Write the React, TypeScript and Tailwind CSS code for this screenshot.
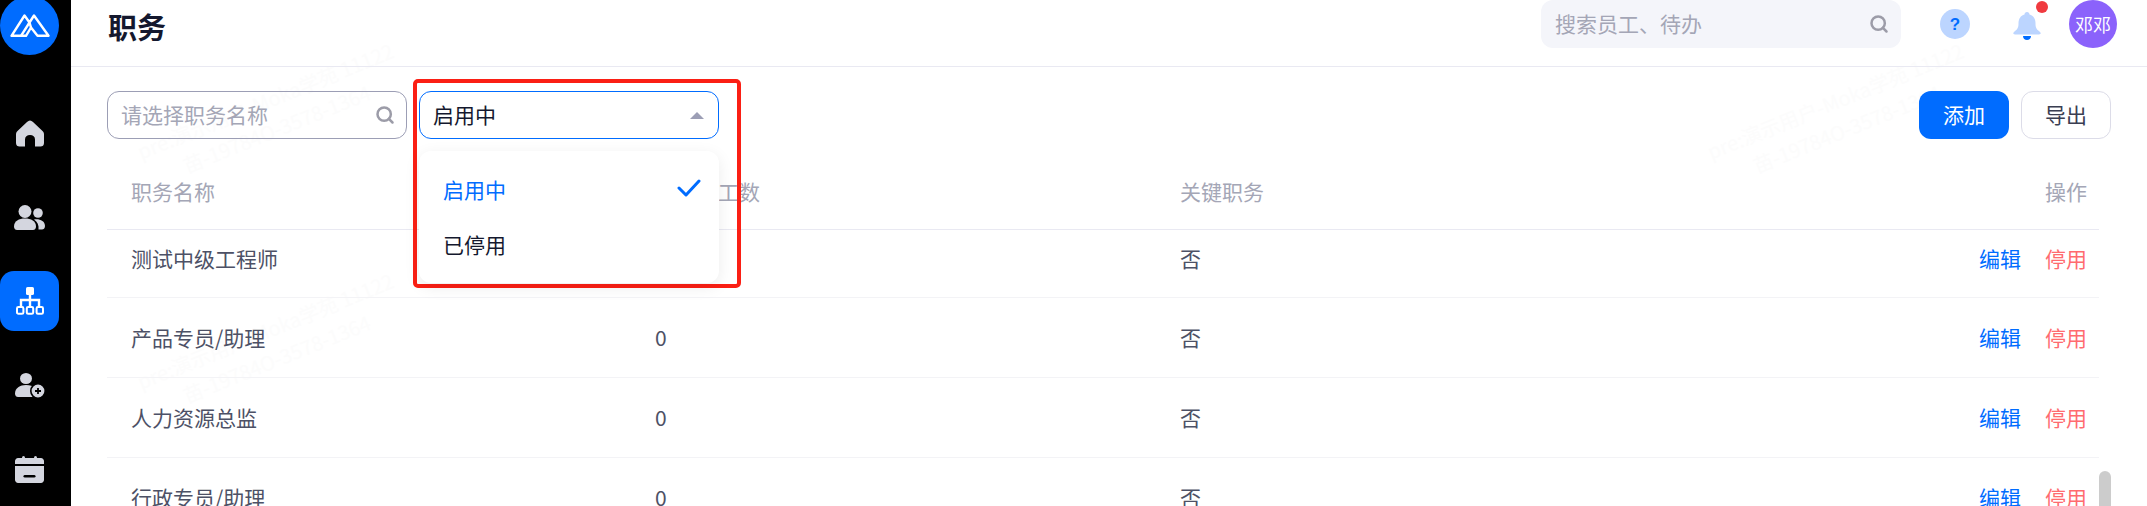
import { Search } from 'lucide-react';

const font = { fontFamily: '"Noto Sans CJK SC", "Liberation Sans", sans-serif' };

const rows = [
  { name: '测试中级工程师', count: '0', key: '否' },
  { name: '产品专员/助理', count: '0', key: '否' },
  { name: '人力资源总监', count: '0', key: '否' },
  { name: '行政专员/助理', count: '0', key: '否' },
];

function Logo() {
  return (
    <svg viewBox="0 0 40 23" className="w-10 h-[23px]" fill="none" stroke="white" strokeWidth="2.4" strokeLinejoin="round">
      <path d="M1.5 21.8 L14.5 1.5 L19.5 8.5 L24 1.5 L38.5 21.8 L27.5 21.8 L21 13.5 L16 21.8 Z" />
      <path d="M19.5 8.5 L11 21.8 M19.5 8.5 L21 13.5" />
    </svg>
  );
}

function NavIcon({ children, active }: { children: React.ReactNode; active?: boolean }) {
  return (
    <div className={`w-[59px] h-[60px] flex items-center justify-center rounded-[14px] ${active ? 'bg-[#006cff]' : ''}`}>
      {children}
    </div>
  );
}

function Sidebar() {
  return (
    <aside className="w-[71px] h-full bg-black shrink-0 overflow-hidden flex flex-col">
      <div className="w-[59px] h-[59px] shrink-0 -mt-[4px] rounded-full bg-[#006cff] flex items-center justify-center">
        <Logo />
      </div>
      <div className="mt-[48px] flex flex-col gap-[24px] shrink-0">
        <NavIcon>
          <svg viewBox="0 0 28 27" className="w-7 h-[27px]" fill="#d4d6df">
            <path d="M14 0.5 C15 0.5 16 1 17 2 L26.5 11 C27.5 12 28 13 28 14.5 L28 23 C28 25.5 26.5 26.5 24.5 26.5 L19 26.5 L19 19.5 C19 16.5 17 15 14 15 C11 15 9 16.5 9 19.5 L9 26.5 L3.5 26.5 C1.5 26.5 0 25.5 0 23 L0 14.5 C0 13 0.5 12 1.5 11 L11 2 C12 1 13 0.5 14 0.5 Z" />
          </svg>
        </NavIcon>
        <NavIcon>
          <svg viewBox="0 0 31 25" className="w-[31px] h-[25px]" fill="#d4d6df">
            <circle cx="11" cy="6.5" r="6.5" />
            <path d="M0 21.5 C0 16 5 13.5 11 13.5 C17 13.5 22 16 22 21.5 C22 24 20.5 25 19 25 L3 25 C1.5 25 0 24 0 21.5 Z" />
            <circle cx="24" cy="8" r="4.8" />
            <path d="M20 14.5 C25 13.5 31 15.5 31 21 C31 23.5 29.5 24.5 28 24.5 L24.5 24.5 C25 20.5 23.5 16.8 20 14.5 Z" />
          </svg>
        </NavIcon>
        <NavIcon active>
          <svg viewBox="0 0 28 28" className="w-7 h-7" fill="none" stroke="white" strokeWidth="2">
            <rect x="10" y="0" width="8" height="8" rx="1.6" fill="white" stroke="none" />
            <path d="M14 8 V20 M5 20 V13 H23 V20" strokeWidth="2.4" />
            <rect x="1" y="20" width="6.4" height="6.8" rx="1.4" />
            <rect x="10.8" y="20" width="6.4" height="6.8" rx="1.4" />
            <rect x="20.6" y="20" width="6.4" height="6.8" rx="1.4" />
          </svg>
        </NavIcon>
        <NavIcon>
          <svg viewBox="0 0 30 25" className="w-[30px] h-[25px]">
            <ellipse cx="11" cy="5.5" rx="6" ry="5.5" fill="#d4d6df" />
            <path d="M0 20.5 C0 15 5 12 11 12 C15 12 18 13 20 15 L20 24 L3 24 C1.5 24 0 23 0 20.5 Z" fill="#d4d6df" />
            <circle cx="23" cy="18" r="7.2" fill="#d4d6df" stroke="black" strokeWidth="1.6" />
            <path d="M23 15 V21 M20 18 H26" stroke="black" strokeWidth="1.8" />
          </svg>
        </NavIcon>
        <NavIcon>
          <svg viewBox="0 0 29 27" className="w-[29px] h-[27px]" fill="#d4d6df">
            <rect x="7" y="0" width="3" height="4" rx="1.5" />
            <rect x="19" y="0" width="3" height="4" rx="1.5" />
            <path d="M3 2 H26 C27.5 2 29 3.5 29 5 V8 H0 V5 C0 3.5 1.5 2 3 2 Z" />
            <path d="M0 10 H29 V24 C29 25.5 27.5 27 26 27 H3 C1.5 27 0 25.5 0 24 Z" />
            <rect x="8.5" y="19" width="12" height="2.6" rx="1.3" fill="black" />
          </svg>
        </NavIcon>
      </div>
    </aside>
  );
}

function Header() {
  return (
    <header className="h-[67px] shrink-0 border-b border-[#e9e9f2] flex items-start pl-[37px] pr-[30px]">
      <h1 className="text-[29px] font-bold text-[#14182e] leading-[52px]">职务</h1>
      <div className="ml-auto w-[360px] h-[48px] bg-[#f4f5fa] rounded-[12px] flex items-center pl-[14px] pr-[12px]">
        <span className="text-[21px] text-[#a4a6b6]">搜索员工、待办</span>
        <Search className="ml-auto text-[#9c9ca8]" size={20} strokeWidth={3} />
      </div>
      <div className="ml-[39px] mt-[9px] w-[30px] h-[30px] rounded-full bg-[#bcd5ff] flex items-center justify-center">
        <span className="text-[17px] font-bold text-[#006cff] leading-none" style={{ fontFamily: '"Liberation Sans", sans-serif' }}>?</span>
      </div>
      <div className="relative ml-[43px] mt-[12px] w-[28px] h-[28px]">
        <svg viewBox="0 0 28 28" className="w-7 h-7">
          <path d="M14 0 C15.5 0 16.5 1 16.5 2.5 C20.5 3.5 22.5 7 22.5 11 C22.5 15 23 17 26.5 19.5 C28.5 21 27.8 22.5 26 22.5 H2 C0.2 22.5 -0.5 21 1.5 19.5 C5 17 5.5 15 5.5 11 C5.5 7 7.5 3.5 11.5 2.5 C11.5 1 12.5 0 14 0 Z" fill="#bcd5ff" />
          <path d="M10 24 H18 C18 26.5 16.2 28 14 28 C11.8 28 10 26.5 10 24 Z" fill="#006cff" />
        </svg>
        <span className="absolute -top-[11px] left-[23px] w-[12px] h-[12px] rounded-full bg-[#f03a3f]" />
      </div>
      <div className="ml-[28px] w-[48px] h-[48px] rounded-full bg-[#8b62fb] flex items-center justify-center text-white text-[18px] leading-none whitespace-nowrap">
        邓邓
      </div>
    </header>
  );
}

function Toolbar() {
  return (
    <div className="flex items-center h-[48px] mt-[24px] ml-[36px] mr-[36px] shrink-0">
      <div className="w-[300px] h-[48px] rounded-[12px] border border-[#9c9eb5] flex items-center pl-[13px] pr-[11px]">
        <span className="text-[21px] text-[#a4a6b6]">请选择职务名称</span>
        <Search className="ml-auto text-[#9c9ca8]" size={20} strokeWidth={3} />
      </div>
      <div className="ml-[12px] w-[300px] h-[48px] rounded-[12px] border border-[#006cff] flex items-center pl-[13px] pr-[14px] bg-white">
        <span className="text-[21px] text-[#14182e]">启用中</span>
        <span className="ml-auto w-0 h-0 border-x-[7px] border-x-transparent border-b-[7px] border-b-[#9c9eb5]" />
      </div>
      <button className="ml-auto w-[90px] h-[48px] rounded-[12px] bg-[#006cff] text-white text-[21px]">添加</button>
      <button className="ml-[12px] w-[90px] h-[48px] rounded-[12px] border border-[#dcdce8] text-[#3a3e52] text-[21px] bg-white">导出</button>
    </div>
  );
}

function Table() {
  return (
    <div className="ml-[36px] mr-[48px] text-[21px] shrink-0">
      <div className="h-[91px] pt-[16px] border-b border-[#e9e9f2] flex items-center text-[#a4a6b6] pr-[12px]">
        <span className="w-[548px] pl-[24px]">职务名称</span>
        <span className="w-[525px] whitespace-nowrap">在职员工数</span>
        <span>关键职务</span>
        <span className="ml-auto">操作</span>
      </div>
      {rows.map((r, i) => (
        <div key={r.name} className={`flex items-center border-b border-[#f3f3f6] text-[#4d5166] pr-[12px] ${i === 0 ? 'h-[68px] pb-[9px]' : 'h-[80px]'}`}>
          <span className="w-[548px] pl-[24px]">{r.name}</span>
          <span className="w-[525px]">{r.count}</span>
          <span>{r.key}</span>
          <span className="ml-auto text-[#006cff]">编辑</span>
          <span className="ml-[24px] text-[#ff6b6f]">停用</span>
        </div>
      ))}
    </div>
  );
}

function Dropdown() {
  return (
    <div className="absolute left-[342px] top-[79px] w-[328px] h-[209px] border-[4px] border-[#fb1f14] rounded-[5px]">
      <div className="ml-[2px] mt-[68px] w-[300px] h-[132px] bg-white rounded-[12px] shadow-[0_4px_16px_rgba(0,0,0,0.08)] flex flex-col justify-center text-[21px]">
        <div className="h-[55px] flex items-center pl-[24px] pr-[18px] text-[#006cff]">
          启用中
          <svg viewBox="0 0 24 18" className="ml-auto w-6 h-[18px] -mt-[3px]" fill="none" stroke="#006cff" strokeWidth="3" strokeLinecap="round" strokeLinejoin="round">
            <path d="M2 9 L9 16 L22 2" />
          </svg>
        </div>
        <div className="h-[55px] flex items-center pl-[24px] text-[#14182e]">已停用</div>
      </div>
    </div>
  );
}

function Watermarks() {
  // barely visible tiled account marks behind the page
  return (
    <>
      <div className="absolute -z-10 left-[40px] top-[85px] w-[320px] -rotate-[22deg] text-center text-[20px] leading-[30px] text-[#fcfcfc] pointer-events-none whitespace-nowrap">pre:演示用户-Moka学苑 11122<br />苗-19784O-3578-1364</div>
      <div className="absolute -z-10 left-[40px] top-[315px] w-[320px] -rotate-[22deg] text-center text-[20px] leading-[30px] text-[#fcfcfc] pointer-events-none whitespace-nowrap">pre:演示用户-Moka学苑 11122<br />苗-19784O-3578-1364</div>
      <div className="absolute -z-10 left-[1610px] top-[85px] w-[320px] -rotate-[22deg] text-center text-[20px] leading-[30px] text-[#fcfcfc] pointer-events-none whitespace-nowrap">pre:演示用户-Moka学苑 11122<br />苗-19784O-3578-1364</div>
    </>
  );
}

export default function App() {
  return (
    <div className="w-[2147px] h-[506px] flex overflow-hidden bg-white" style={font}>
      <Sidebar />
      <main className="relative isolate flex-1 flex flex-col min-w-0 overflow-hidden">
        <Watermarks />
        <Header />
        <Toolbar />
        <Table />
        <Dropdown />
        <div className="absolute right-[36px] top-[471px] w-[12px] h-[60px] rounded-full bg-[#cccccc]" />
      </main>
    </div>
  );
}
